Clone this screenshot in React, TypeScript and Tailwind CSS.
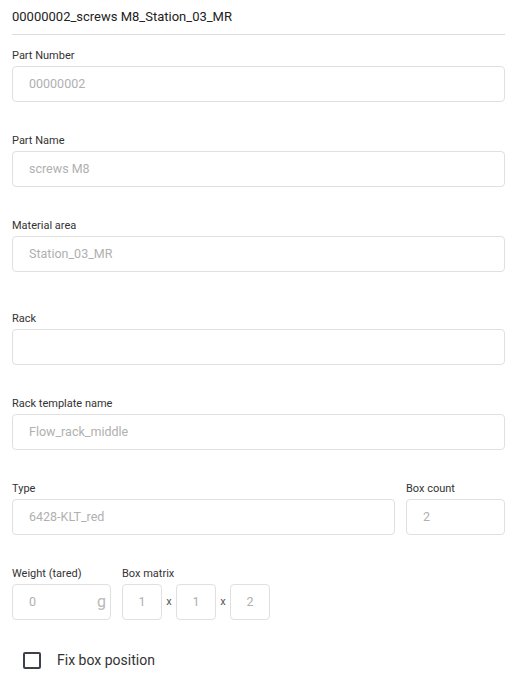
import React from 'react';

const Label = ({ children }: { children: React.ReactNode }) => (
  <div className="text-[11px] leading-4 text-[#333] mb-[2px]">{children}</div>
);

const Box = ({
  value,
  className = '',
  children,
}: {
  value?: string;
  className?: string;
  children?: React.ReactNode;
}) => (
  <div
    className={`h-9 border border-[#e0e0e0] rounded-[4px] bg-white flex items-center text-[12.5px] text-[#b0b0b0] ${className}`}
  >
    {value}
    {children}
  </div>
);

const Field = ({ label, value, className = '' }: { label: string; value?: string; className?: string }) => (
  <div className={className}>
    <Label>{label}</Label>
    <Box value={value} className="px-4" />
  </div>
);

export default function App() {
  return (
    <div
      className="w-[514px] h-[674px] bg-white pl-3 pr-[9px] overflow-hidden"
      style={{ fontFamily: 'Roboto, "Liberation Sans", sans-serif' }}
    >
      <div className="pt-[7px] pb-[7px] border-b border-[#dcdcdc] text-[13px] leading-5 text-[#222]">
        00000002_screws M8_Station_03_MR
      </div>

      <div className="mt-[13px] flex flex-col gap-[31px]">
        <Field label="Part Number" value="00000002" />
        <Field label="Part Name" value="screws M8" />
        <Field label="Material area" value="Station_03_MR" />
        <Field label="Rack" className="mt-2" />
        <Field label="Rack template name" value="Flow_rack_middle" />

        <div className="flex gap-[11px]">
          <Field label="Type" value="6428-KLT_red" className="flex-1" />
          <Field label="Box count" value="2" className="w-[99px]" />
        </div>

        <div className="flex gap-[11px]">
          <div className="w-[99px]">
            <Label>Weight (tared)</Label>
            <Box className="pl-4 pr-[4px] justify-between">
              <span>0</span>
              <span className="text-[16px] text-[#b8b8b8]">g</span>
            </Box>
          </div>
          <div>
            <Label>Box matrix</Label>
            <div className="flex items-center">
              <Box value="1" className="w-10 justify-center" />
              <span className="w-[14px] text-center text-[11px] text-[#555]">x</span>
              <Box value="1" className="w-10 justify-center" />
              <span className="w-[14px] text-center text-[11px] text-[#555]">x</span>
              <Box value="2" className="w-10 justify-center" />
            </div>
          </div>
        </div>
      </div>

      <label className="mt-[30px] ml-[11px] flex items-center gap-4">
        <span className="w-[18px] h-[17px] border-2 border-[#3c4248] rounded-[2px]" />
        <span className="text-[14px] leading-5 text-[#333]">Fix box position</span>
      </label>
    </div>
  );
}
